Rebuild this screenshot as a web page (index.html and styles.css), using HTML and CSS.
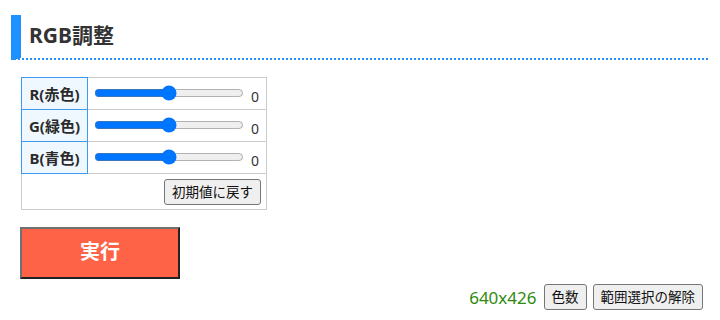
FILE: index.html
```html
<!DOCTYPE html>
<html lang="ja">
<head>
  <meta charset="UTF-8" />
  <meta name="viewport" content="width=device-width, initial-scale=1.0" />
  <title>RGB調整</title>
  <link rel="stylesheet" href="styles.css">
</head>
<body>
  <h2 class="title">RGB調整</h2>
  <table class="rgb-table">
    <tr>
      <th>R(赤色)</th>
      <td><input type="range" min="-255" max="255" value="0" class="slider"> <span class="val">0</span></td>
    </tr>
    <tr>
      <th>G(緑色)</th>
      <td><input type="range" min="-255" max="255" value="0" class="slider"> <span class="val">0</span></td>
    </tr>
    <tr>
      <th>B(青色)</th>
      <td><input type="range" min="-255" max="255" value="0" class="slider"> <span class="val">0</span></td>
    </tr>
    <tr>
      <td colspan="2" class="reset-cell"><button class="btn">初期値に戻す</button></td>
    </tr>
  </table>
  <button class="run">実行</button>
  <div class="footer">
    <span class="size">640x426</span>
    <button class="btn">色数</button>
    <button class="btn">範囲選択の解除</button>
  </div>
</body>
</html>
```

FILE: styles.css
```css
body {
  margin: 0;
  font-family: 'Noto Sans', 'Noto Sans CJK JP', sans-serif;
  color: #333;
  background: #fff;
}
.title {
  margin: 15px 12px 0 11px;
  height: 43px;
  padding-left: 8px;
  border-left: 10px solid #1e90ff;
  border-bottom: 2px dotted #1e90ff;
  font-size: 21px;
  font-weight: bold;
  line-height: 41px;
  color: #333;
}
.rgb-table {
  margin: 17px 0 0 21px;
  width: 246px;
  border-collapse: collapse;
  font-size: 15px;
}
.rgb-table th,
.rgb-table td {
  border: 1px solid #ccc;
  height: 31px;
  padding: 0;
}
.rgb-table th {
  width: 65px;
  background: #f0f8ff;
  border-color: #3d9af0;
  font-weight: bold;
  line-height: 20px;
  color: #2a2a2a;
}
.rgb-table td {
  padding-left: 6px;
  white-space: nowrap;
}
.slider {
  width: 150px;
  height: 16px;
  margin: 0 3px 0 0;
  vertical-align: middle;
}
.val {
  display: inline-block;
  vertical-align: -4px;
  font-size: 14px;
  color: #333;
}
.rgb-table td.reset-cell {
  height: 35px;
  text-align: right;
  padding-right: 5px;
}
.btn {
  font-family: 'Noto Sans', 'Noto Sans CJK JP', sans-serif;
  font-size: 13.5px;
  line-height: 18px;
  padding: 3px 7px;
  background: #efefef;
  color: #111;
  border: 1px solid #767676;
  border-radius: 3px;
}
.run {
  display: block;
  margin: 17px 0 0 20px;
  width: 160px;
  height: 52px;
  padding: 0 0 5px;
  background: #ff6347;
  color: #fff;
  font-family: 'Noto Sans', 'Noto Sans CJK JP', sans-serif;
  font-size: 20px;
  font-weight: bold;
  border: 2px solid;
  border-color: #707070 #222 #222 #707070;
}
.footer {
  margin: 5px 17px 0 0;
  display: flex;
  justify-content: flex-end;
  align-items: center;
  gap: 6px;
}
.size {
  color: #2e8b0e;
  font-size: 17px;
  margin-right: 1px;
}
```
